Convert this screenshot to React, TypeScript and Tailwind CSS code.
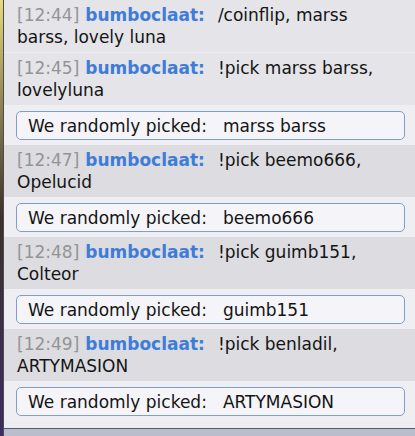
import React from "react";

type Msg = { time: string; lines: [string, string]; pick?: string; dark?: boolean };

const msgs: Msg[] = [
  { time: "12:44", lines: ["/coinflip, marss", "barss, lovely luna"] },
  { time: "12:45", lines: ["!pick marss barss,", "lovelyluna"], pick: "marss barss" },
  { time: "12:47", lines: ["!pick beemo666,", "Opelucid"], pick: "beemo666", dark: true },
  { time: "12:48", lines: ["!pick guimb151,", "Colteor"], pick: "guimb151", dark: true },
  { time: "12:49", lines: ["!pick benladil,", "ARTYMASION"], pick: "ARTYMASION", dark: true },
];

export default function App() {
  return (
    <div className="w-[415px] h-[436px] flex overflow-hidden font-['DejaVu_Sans',Verdana,sans-serif] text-[17px] leading-[22px]">
      <div className="w-[3px] bg-gradient-to-b from-[#e6dc7a] via-[#3b3128] to-[#3c2b62]" />
      <div className="w-px bg-[#4c4c50]" />
      <div className="flex-1 flex flex-col bg-[#ececf1]">
        <div className="flex-1 overflow-hidden flex flex-col">
          {msgs.map((m, i) => (
            <React.Fragment key={i}>
              <div
                className={
                  (m.dark ? "bg-[#dcdce1] " : "bg-[#e4e4e9] ") +
                  (i === 0 ? "mb-px " : "") +
                  "pl-[13px] pr-2 py-[4px] text-[#141414]"
                }
              >
                <span className="text-[#949494]">[{m.time}]</span>
                <span className="ml-[6px] font-bold text-[#3f7cd8]">bumboclaat:</span>
                <span className="ml-[13px]">{m.lines[0]}</span>
                <br />
                {m.lines[1]}
              </div>
              {m.pick && (
                <div className="pl-[12px] pr-[10px] pt-[6px] pb-[5px] bg-[#eeeef3]">
                  <div className="h-[29px] flex items-center rounded-[5px] border border-[#819ec8] bg-[#f5f5f9] pl-[11px] text-[#141414] whitespace-pre">
                    <span>We randomly picked:</span>
                    <span className="ml-[16px]">{m.pick}</span>
                  </div>
                </div>
              )}
            </React.Fragment>
          ))}
        </div>
        <div className="h-px bg-[#5a5a60]" />
        <div className="h-[7px] bg-[#b9bdcc]" />
      </div>
    </div>
  );
}
